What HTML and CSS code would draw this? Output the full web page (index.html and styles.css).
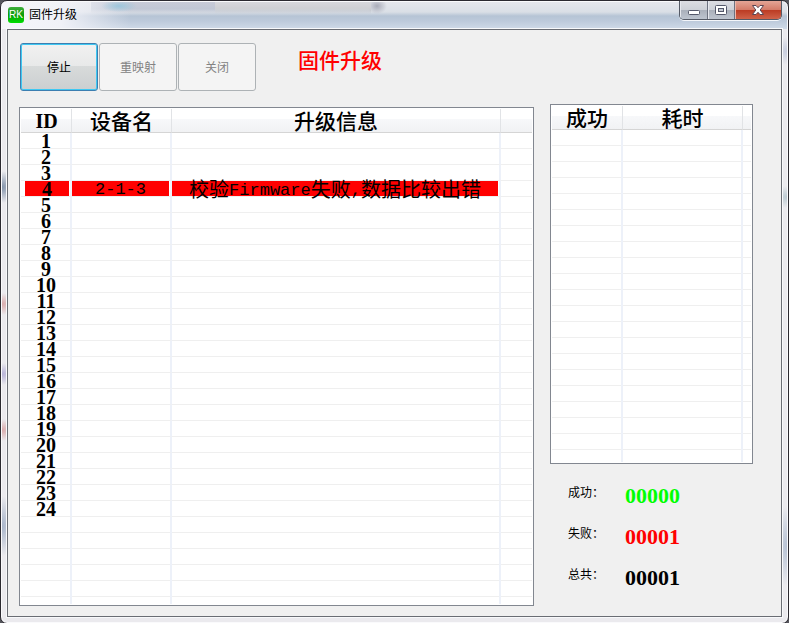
FILE: index.html
```html
<!DOCTYPE html>
<html lang="zh-CN">
<head>
<meta charset="utf-8">
<title>固件升级</title>
<link rel="stylesheet" href="styles.css">
</head>
<body>
<div class="window">
  <header class="titlebar">
    <svg class="logo" viewBox="0 0 16 16" aria-hidden="true">
      <defs><linearGradient id="lg" x1="0" y1="0" x2="0" y2="1"><stop offset="0" stop-color="#3fae3c"/><stop offset=".5" stop-color="#089a08"/><stop offset="1" stop-color="#00e000"/></linearGradient></defs>
      <rect width="16" height="16" rx="3" fill="url(#lg)"/>
      <text x="8" y="11" text-anchor="middle" class="logo-text">RK</text>
    </svg>
    <h1 class="caption">固件升级</h1>
    <div class="controls">
      <button class="ctl ctl-min" aria-label="最小化"><svg width="14" height="12" viewBox="0 0 14 12"><rect x="1.5" y="6.500" width="11" height="4" rx="1" fill="#fff" stroke="#54586a"/></svg></button>
      <button class="ctl ctl-max" aria-label="最大化"><svg width="14" height="12" viewBox="0 0 14 12"><rect x="1.500" y="1.500" width="11" height="9" rx="1" fill="#fff" stroke="#54586a"/><rect x="4.500" y="4.500" width="5" height="3" fill="#c5c9d2" stroke="#54586a"/></svg></button>
      <button class="ctl ctl-close" aria-label="关闭窗口"><svg width="14" height="12" viewBox="0 0 14 12"><path d="M1.500 1.500H5L7 3.700L9 1.500H12.500L9.200 6L12.500 10.500H9L7 8.300L5 10.500H1.500L4.800 6Z" fill="#fff" stroke="#5b4452" stroke-linejoin="round"/></svg></button>
    </div>
  </header>
  <main class="client">
    <section class="left">
      <div class="toolbar">
        <button class="btn btn-default">停止</button>
        <button class="btn" disabled>重映射</button>
        <button class="btn" disabled>关闭</button>
        <h2 class="mode">固件升级</h2>
      </div>
      <div class="list">
        <table class="grid">
          <colgroup><col class="c-id"><col class="c-dev"><col><col class="c-rest"></colgroup>
          <thead><tr><th class="latin">ID</th><th>设备名</th><th>升级信息</th><th></th></tr></thead>
          <tbody>
            <tr><td>1</td><td></td><td></td><td></td></tr>
            <tr><td>2</td><td></td><td></td><td></td></tr>
            <tr><td>3</td><td></td><td></td><td></td></tr>
            <tr class="failed"><td><div class="mark mark-id">4</div></td><td><div class="mark mono">2-1-3</div></td><td><div class="mark message">校验<span class="mono">Firmware</span>失败<span class="mono">,</span>数据比较出错</div></td><td></td></tr>
            <tr><td>5</td><td></td><td></td><td></td></tr>
            <tr><td>6</td><td></td><td></td><td></td></tr>
            <tr><td>7</td><td></td><td></td><td></td></tr>
            <tr><td>8</td><td></td><td></td><td></td></tr>
            <tr><td>9</td><td></td><td></td><td></td></tr>
            <tr><td>10</td><td></td><td></td><td></td></tr>
            <tr><td>11</td><td></td><td></td><td></td></tr>
            <tr><td>12</td><td></td><td></td><td></td></tr>
            <tr><td>13</td><td></td><td></td><td></td></tr>
            <tr><td>14</td><td></td><td></td><td></td></tr>
            <tr><td>15</td><td></td><td></td><td></td></tr>
            <tr><td>16</td><td></td><td></td><td></td></tr>
            <tr><td>17</td><td></td><td></td><td></td></tr>
            <tr><td>18</td><td></td><td></td><td></td></tr>
            <tr><td>19</td><td></td><td></td><td></td></tr>
            <tr><td>20</td><td></td><td></td><td></td></tr>
            <tr><td>21</td><td></td><td></td><td></td></tr>
            <tr><td>22</td><td></td><td></td><td></td></tr>
            <tr><td>23</td><td></td><td></td><td></td></tr>
            <tr><td>24</td><td></td><td></td><td></td></tr>
            <tr class="blank blank-log"><td></td><td></td><td></td><td></td></tr>
          </tbody>
        </table>
      </div>
    </section>
    <section class="right">
      <div class="list">
        <table class="grid">
          <colgroup><col class="c-ok"><col><col class="c-end"></colgroup>
          <thead><tr><th>成功</th><th>耗时</th><th></th></tr></thead>
          <tbody><tr class="blank blank-time"><td></td><td></td><td></td></tr></tbody>
        </table>
      </div>
      <dl class="stats">
        <dt>成功：</dt><dd class="ok">00000</dd>
        <dt>失败：</dt><dd class="bad">00001</dd>
        <dt>总共：</dt><dd>00001</dd>
      </dl>
    </section>
  </main>
</div>
</body>
</html>
```
FILE: styles.css
```css
* { box-sizing: border-box; }
body {
  margin: 0;
  background: #55555c;
  font: 12px/16px "Noto Sans CJK SC", sans-serif;
  color: #000;
}
h1, h2, dl, dd { margin: 0; font-weight: 400; }
.window {
  display: flex;
  flex-direction: column;
  min-height: 100vh;
  padding: 0 6px 6px;
  border: 1px solid #2b2930;
  border-radius: 7px;
  background:
    radial-gradient(ellipse 18px 6px at 118px 5px, #9cc6dc, transparent),
    linear-gradient(90deg, #f6f6fa 0, #f0f1f7 60px, transparent 130px) top / 100% 28px no-repeat,
    linear-gradient(#d9d9de 0, #cfd0d4 7px, #b5b9c166 10px, transparent 13px) 214px 0 / 156px 13px no-repeat,
    linear-gradient(#c9cbd8 0, #c1c7d5 8px, transparent 13px) 90px 0 / 124px 13px no-repeat,
    radial-gradient(ellipse 10px 8px at 376px 5px, #a9abb8, transparent),
    linear-gradient(#e6e7ed 0, #dadfe6 11px, #b6c4d5 15px, #bdcadb 20px, #cfdae8 28px) top / 100% 28px no-repeat,
    radial-gradient(ellipse 20px 16px at 0 166px, #7f90a8, transparent) 0 20px / 50% 100% no-repeat,
    radial-gradient(ellipse 20px 11px at 0 303px, #d9a9aa, transparent) left / 50% 100% no-repeat,
    radial-gradient(ellipse 20px 11px at 0 373px, #b5b0d6, transparent) left / 50% 100% no-repeat,
    radial-gradient(ellipse 20px 11px at 0 429px, #d9a9aa, transparent) left / 50% 100% no-repeat,
    radial-gradient(ellipse 20px 30px at 0 525px, #a5b2c8, transparent) left / 50% 100% no-repeat,
    radial-gradient(ellipse 20px 14px at 100% 50px, #c5cbdd, transparent) right / 50% 100% no-repeat,
    radial-gradient(ellipse 20px 11px at 100% 196px, #b9c8d0, transparent) right / 50% 100% no-repeat,
    radial-gradient(ellipse 20px 40px at 100% 545px, #b3bfd2, transparent) right / 50% 100% no-repeat,
    #ebeaee;
  box-shadow: inset 0 0 0 1px #fafafc;
}
.titlebar {
  display: flex;
  height: 28px;
  gap: 5px;
}
.logo { width: 16px; height: 16px; margin: 6px 0 0 1px; }
.logo-text { font: 10px "Liberation Sans", sans-serif; fill: #fff; }
.caption { flex: 1; margin-top: 5px; font-size: 12px; line-height: 16px; }
.controls {
  display: flex;
  height: 19px;
  border: 1px solid #555a66;
  border-top: 0;
  border-radius: 0 0 5px 5px;
  box-shadow: 0 1px 0 #f4f6fa;
  overflow: hidden;
}
.ctl {
  display: flex;
  align-items: center;
  justify-content: center;
  width: 27px;
  padding: 0;
  border: 0;
  border-right: 1px solid #6d7280;
  background: linear-gradient(#dcdde2 0, #cdd0d7 50%, #a9afba 50%, #bdc4cf 100%);
  box-shadow: inset 1px 0 0 #e6e8ee;
}
.ctl-min { width: 28px; }
.ctl-close {
  width: 46px;
  border: 0;
  background: linear-gradient(#e4a596 0, #d37a67 50%, #bb3a22 50%, #d0634a 100%);
  box-shadow: inset 1px 0 0 #ecb9ad;
}
.client {
  flex: 1;
  display: grid;
  grid-template-columns: 1fr 203px;
  gap: 16px;
  padding: 0 28px 10px 11px;
  border: 1px solid #6a6d74;
  background: #f0f0f0;
  box-shadow: 0 0 0 1px #f8f9fb;
}
.left { padding-top: 13px; }
.right { padding-top: 74px; }
.toolbar {
  display: flex;
  gap: 1px;
  height: 48px;
  margin: 0 0 16px 1px;
}
.btn {
  width: 78px;
  padding: 0;
  border: 1px solid #adb2b5;
  border-radius: 3px;
  background: #f4f4f4;
  color: #838383;
  font: inherit;
}
.btn-default {
  border-color: #3c7fb1;
  background: linear-gradient(#f1f1f1 0, #e8e9e9 47%, #d8dbdb 47%, #cbcfd0 100%);
  box-shadow: inset 0 0 0 1px #3fc8f2;
  color: #000;
}
.mode {
  margin-left: 41px;
  font-size: 21px;
  line-height: 32px;
  font-weight: 500;
  color: #f00;
}
.list {
  padding: 1px;
  border: 1px solid #828790;
  background: #fff;
}
.grid {
  width: 100%;
  table-layout: fixed;
  border-spacing: 0;
  font: 700 20px/13px "Liberation Serif", "Noto Sans CJK SC", serif;
  text-align: center;
}
.c-id { width: 51px; }
.c-dev { width: 100px; }
.c-rest { width: 31px; }
.c-ok { width: 71px; }
.c-end { width: 8px; }
.grid th {
  height: 24px;
  padding: 0;
  border-right: 1px solid #e1e3e6;
  border-bottom: 1px solid #d5d5d5;
  background: linear-gradient(#fff 45%, #f7f8fa 45%, #f1f2f4);
  font: 500 21px/15px "Noto Sans CJK SC", sans-serif;
}
.grid .latin { padding: 2px 0 0 1px; font: 700 20px/15px "Liberation Serif", serif; }
.grid td {
  height: 16px;
  padding: 2px 0 0 1px;
  border-right: 2px solid #edf1f9;
  border-bottom: 1px solid #efefef;
}
.grid .failed td { padding: 0; }
.grid th:last-child, .grid td:last-child { border-right: 0; }
.grid .blank td {
  border-bottom: 0;
  background: repeating-linear-gradient(#fff 0 15px, #efefef 15px 16px);
}
.grid .blank-log td { height: 87px; }
.grid .blank-time td { height: 332px; }
.mark {
  height: 15px;
  margin-right: 1px;
  padding-top: 2px;
  background: #f00;
  white-space: nowrap;
}
.mark-id { margin-left: 4px; }
.message { font: 20px/11px "Noto Sans CJK SC", sans-serif; }
.mono { font-family: "Liberation Mono", monospace; font-size: 17px; font-weight: 400; }
.message .mono { vertical-align: 2px; }
.stats {
  display: grid;
  grid-template-columns: 57px 1fr;
  row-gap: 17px;
  padding: 20px 0 0 18px;
}
.stats dt { line-height: 16px; }
.stats dd { font: 700 22px/24px "Liberation Serif", serif; }
.ok { color: #0f0; }
.bad { color: #f00; }
```
